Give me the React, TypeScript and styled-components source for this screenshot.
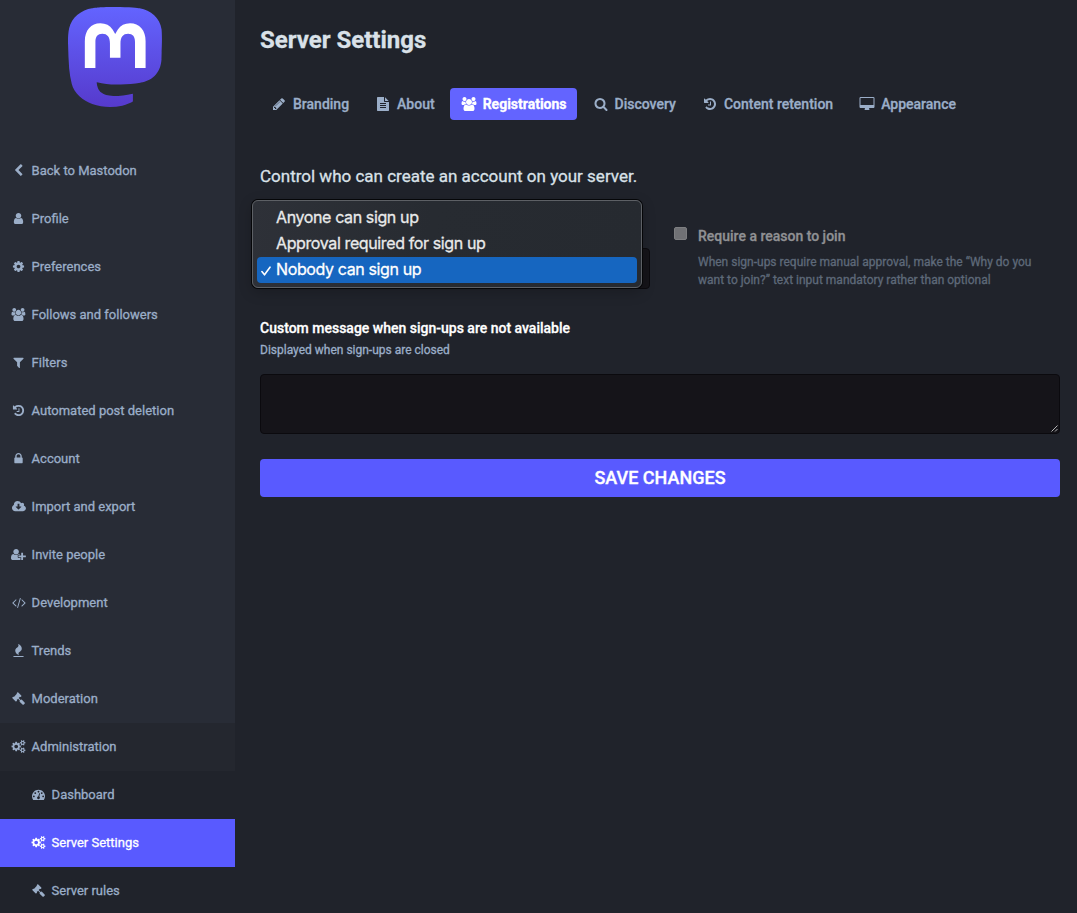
import React from 'react';
import styled, { createGlobalStyle, css } from 'styled-components';

const GlobalStyle = createGlobalStyle`
  *, *::before, *::after { box-sizing: border-box; }
  html, body { margin: 0; padding: 0; background: #20232b; }
  body {
    font-family: Roboto, "Liberation Sans", sans-serif;
    overflow: hidden;
    -webkit-text-stroke: 0.3px currentColor;
  }
`;

const icons = {
  back: { w: 1792, d: 'M1427 301l-531 531 531 531q19 19 19 45t-19 45l-166 166q-19 19-45 19t-45-19l-742-742q-19-19-19-45t19-45l742-742q19-19 45-19t45 19l166 166q19 19 19 45t-19 45z' },
  user: { w: 1792, d: 'M1536 1399q0 109-62.5 187t-150.5 78h-854q-88 0-150.5-78t-62.5-187q0-85 8.5-160.5t31.5-152 58.5-131 94-89 134.5-34.5q131 128 313 128t313-128q76 0 134.5 34.5t94 89 58.5 131 31.5 152 8.5 160.5zm-256-887q0 159-112.5 271.5t-271.5 112.5-271.5-112.5-112.5-271.5 112.5-271.5 271.5-112.5 271.5 112.5 112.5 271.5z' },
  cog: { w: 1792, d: 'M1152 896q0-106-75-181t-181-75-181 75-75 181 75 181 181 75 181-75 75-181zm512-109v222q0 12-8 23t-20 13l-185 28q-19 54-39 91 35 50 107 138 10 12 10 25t-9 23q-27 37-99 108t-94 71q-12 0-26-9l-138-108q-44 23-91 38-16 136-29 186-7 28-36 28h-222q-14 0-24.5-8.5t-11.5-21.5l-28-184q-49-16-90-37l-141 107q-10 9-25 9-14 0-25-11-126-114-165-168-7-10-7-23 0-12 8-23 15-21 51-66.5t54-70.5q-27-50-41-99l-183-27q-13-2-21-12.5t-8-23.5v-222q0-12 8-23t19-13l186-28q14-46 39-92-40-57-107-138-10-12-10-24 0-10 9-23 26-36 98.5-107.5t94.5-71.5q13 0 26 10l138 107q44-23 91-38 16-136 29-186 7-28 36-28h222q14 0 24.5 8.5t11.5 21.5l28 184q49 16 90 37l142-107q9-9 24-9 13 0 25 10 129 119 165 170 7 8 7 22 0 12-8 23-15 21-51 66.5t-54 70.5q26 50 41 98l183 28q13 2 21 12.5t8 23.5z' },
  users: { w: 2048, d: 'M657 896q-162 5-265 128h-134q-82 0-138-40.5t-56-118.5q0-353 124-353 6 0 43.5 21t97.5 42.5 119 21.5q67 0 133-23-5 37-5 66 0 139 81 256zm1071 637q0 120-73 189.5t-194 69.5h-874q-121 0-194-69.5t-73-189.5q0-53 3.5-103.5t14-109 26.5-108.5 43-97.5 62-81 85.5-53.5 111.5-20q10 0 43 21.5t73 48 107 48 135 21.5 135-21.5 107-48 73-48 43-21.5q61 0 111.5 20t85.5 53.5 62 81 43 97.5 26.5 108.5 14 109 3.5 103.5zm-1024-1277q0 106-75 181t-181 75-181-75-75-181 75-181 181-75 181 75 75 181zm704 384q0 159-112.5 271.5t-271.5 112.5-271.5-112.5-112.5-271.5 112.5-271.5 271.5-112.5 271.5 112.5 112.5 271.5zm576 225q0 78-56 118.5t-138 40.5h-134q-103-123-265-128 81-117 81-256 0-29-5-66 66 23 133 23 59 0 119-21.5t97.5-42.5 43.5-21q124 0 124 353zm-128-609q0 106-75 181t-181 75-181-75-75-181 75-181 181-75 181 75 75 181z' },
  filter: { w: 1792, d: 'M1595 295q17 41-14 70l-493 493v742q0 42-39 59-13 5-25 5-27 0-45-19l-256-256q-19-19-19-45v-486l-493-493q-31-29-14-70 17-39 59-39h1280q42 0 59 39z' },
  history: { w: 1792, d: 'M1664 896q0 156-61 298t-164 245-245 164-298 61q-172 0-327-72.5t-264-204.5q-7-10-6.5-22.5t8.5-20.5l137-138q10-9 25-9 16 2 23 12 73 95 179 147t225 52q104 0 198.5-40.5t163.5-109.5 109.5-163.5 40.5-198.5-40.5-198.5-109.5-163.5-163.5-109.5-198.5-40.5q-98 0-188 35.5t-160 101.5l137 138q31 30 14 69-17 40-59 40h-448q-26 0-45-19t-19-45v-448q0-42 40-59 39-17 69 14l130 129q107-101 244.5-156.5t284.5-55.5q156 0 298 61t245 164 164 245 61 298zm-640-288v448q0 14-9 23t-23 9h-320q-14 0-23-9t-9-23v-64q0-14 9-23t23-9h224v-352q0-14 9-23t23-9h64q14 0 23 9t9 23z' },
  lock: { w: 1792, d: 'M640 768h512v-192q0-106-75-181t-181-75-181 75-75 181v192zm832 96v576q0 40-28 68t-68 28h-960q-40 0-68-28t-28-68v-576q0-40 28-68t68-28h32v-192q0-184 132-316t316-132 316 132 132 316v192h32q40 0 68 28t28 68z' },
  cloud: { w: 1920, d: 'M1280 928q0-14-9-23t-23-9h-224v-352q0-13-9.5-22.5t-22.5-9.5h-192q-13 0-22.5 9.5t-9.5 22.5v352h-224q-13 0-22.5 9.5t-9.5 22.5q0 14 9 23l352 352q9 9 23 9t23-9l351-351q10-12 10-24zm640 224q0 159-112.5 271.5t-271.5 112.5h-1088q-185 0-316.5-131.5t-131.5-316.5q0-130 70-240t188-165q-2-30-2-43 0-212 150-362t362-150q156 0 285.5 87t188.5 231q71-62 166-62 106 0 181 75t75 181q0 76-41 138 130 31 213.5 135.5t83.5 238.5z' },
  userPlus: { w: 2048, d: 'M704 896q-159 0-271.5-112.5t-112.5-271.5 112.5-271.5 271.5-112.5 271.5 112.5 112.5 271.5-112.5 271.5-271.5 112.5zm960 128h352q13 0 22.5 9.5t9.5 22.5v192q0 13-9.5 22.5t-22.5 9.5h-352v352q0 13-9.5 22.5t-22.5 9.5h-192q-13 0-22.5-9.5t-9.5-22.5v-352h-352q-13 0-22.5-9.5t-9.5-22.5v-192q0-13 9.5-22.5t22.5-9.5h352v-352q0-13 9.5-22.5t22.5-9.5h192q13 0 22.5 9.5t9.5 22.5v352zm-736 224q0 52 38 90t90 38h256v238q-68 50-171 50h-874q-121 0-194-69t-73-190q0-53 3.5-103.5t14-109 26.5-108.5 43-97.5 62-81 85.5-53.5 111.5-20q19 0 39 17 79 61 154.5 91.5t164.5 30.5 164.5-30.5 154.5-91.5q20-17 39-17 132 0 217 96h-223q-52 0-90 38t-38 90v192z' },
  code: { w: 1920, d: 'M617 1399l-50 50q-10 10-23 10t-23-10l-466-466q-10-10-10-23t10-23l466-466q10-10 23-10t23 10l50 50q10 10 10 23t-10 23l-393 393 393 393q10 10 10 23t-10 23zm591-1067l-373 1291q-4 13-15.5 19.5t-23.5 2.5l-62-17q-13-4-19.5-15.5t-2.5-24.5l373-1291q4-13 15.5-19.5t23.5-2.5l62 17q13 4 19.5 15.5t2.5 24.5zm657 651l-466 466q-10 10-23 10t-23-10l-50-50q-10-10-10-23t10-23l393-393-393-393q-10-10-10-23t10-23l50-50q10-10 23-10t23 10l466 466q10 10 10 23t-10 23z' },
  fire: { w: 1792, d: 'M1600 1696v64q0 13-9.5 22.5t-22.5 9.5h-1344q-13 0-22.5-9.5t-9.5-22.5v-64q0-13 9.5-22.5t22.5-9.5h1344q13 0 22.5 9.5t9.5 22.5zm-256-1056q0 78-24.5 144t-64 112.5-87.5 88-96 77.5-87.5 72-64 81.5-24.5 96.5q0 96 67 224l-4-1 1 1q-90-41-160-83t-138.5-100-113.5-122.5-72.5-150.5-27.5-184q0-78 24.5-144t64-112.5 87.5-88 96-77.5 87.5-72 64-81.5 24.5-96.5q0-94-66-224l3 1-1-1q90 41 160 83t138.5 100 113.5 122.5 72.5 150.5 27.5 184z' },
  gavel: { w: 1792, d: 'M1771 1536q0 53-37 90l-107 108q-39 37-91 37-53 0-90-37l-363-364q-38-36-38-90 0-53 43-96l-256-256-126 126q-14 14-34 14t-34-14q2 2 12.5 12t12.5 13 10 11.5 10 13.5 6 13.5 5.5 16.5 1.5 18q0 38-28 68-3 3-16.5 18t-19 20.5-18.5 16.5-22 15.5-22 9-26 4.5q-40 0-68-28l-408-408q-28-28-28-68 0-13 4.5-26t9-22 15.5-22 16.5-18.5 20.5-19 18-16.5q30-28 68-28 10 0 18 1.5t16.5 5.5 13.5 6 13.5 10 11.5 10 13 12.5 12 12.5q-14-14-14-34t14-34l348-348q14-14 34-14t34 14q-2-2-12.5-12t-12.5-13-10-11.5-10-13.5-6-13.5-5.5-16.5-1.5-18q0-38 28-68 3-3 16.5-18t19-20.5 18.5-16.5 22-15.5 22-9 26-4.5q40 0 68 28l408 408q28 28 28 68 0 13-4.5 26t-9 22-15.5 22-16.5 18.5-20.5 19-18 16.5q-30 28-68 28-10 0-18-1.5t-16.5-5.5-13.5-6-13.5-10-11.5-10-13-12.5-12-12.5q14 14 14 34t-14 34l-126 126 256 256q43-43 96-43 52 0 91 37l363 363q37 39 37 91z' },
  cogs: { w: 1920, d: 'M832 896q0-106-75-181t-181-75-181 75-75 181 75 181 181 75 181-75 75-181zm768 512q0-52-38-90t-90-38-90 38-38 90q0 53 37.5 90.5t90.5 37.5 90.5-37.5 37.5-90.5zm0-1024q0-52-38-90t-90-38-90 38-38 90q0 53 37.5 90.5t90.5 37.5 90.5-37.5 37.5-90.5zm-384 421v185q0 10-7 19.5t-16 10.5l-155 24q-11 35-32 76 34 48 90 115 7 11 7 20 0 12-7 19-23 30-82.5 89.5t-78.5 59.5q-11 0-21-7l-115-90q-37 19-77 31-11 108-23 155-7 24-30 24h-186q-11 0-20-7.5t-10-17.5l-23-153q-34-10-75-31l-118 89q-7 7-20 7-11 0-21-8-144-133-144-160 0-9 7-19 10-14 41-53t47-61q-23-44-35-82l-152-24q-10-1-17-9.5t-7-19.5v-185q0-10 7-19.5t16-10.5l155-24q11-35 32-76-34-48-90-115-7-11-7-20 0-12 7-20 22-30 82-89t79-59q11 0 21 7l115 90q34-18 77-32 11-108 23-154 7-24 30-24h186q11 0 20 7.5t10 17.5l23 153q34 10 75 31l118-89q8-7 20-7 11 0 21 8 144 133 144 160 0 8-7 19-12 16-42 54t-45 60q23 48 34 82l152 23q10 2 17 10.5t7 19.5zm640 533v140q0 16-149 31-12 27-30 52 51 113 51 138 0 4-4 7-122 71-124 71-8 0-46-47t-52-68q-20 2-30 2t-30-2q-14 21-52 68t-46 47q-2 0-124-71-4-3-4-7 0-25 51-138-18-25-30-52-149-15-149-31v-140q0-16 149-31 13-29 30-52-51-113-51-138 0-4 4-7 4-2 35-20t59-34 30-16q8 0 46 46.5t52 67.5q20-2 30-2t30 2q51-71 92-112l6-2q4 0 124 70 4 3 4 7 0 25-51 138 17 23 30 52 149 15 149 31zm0-1024v140q0 16-149 31-12 27-30 52 51 113 51 138 0 4-4 7-122 71-124 71-8 0-46-47t-52-68q-20 2-30 2t-30-2q-14 21-52 68t-46 47q-2 0-124-71-4-3-4-7 0-25 51-138-18-25-30-52-149-15-149-31v-140q0-16 149-31 13-29 30-52-51-113-51-138 0-4 4-7 4-2 35-20t59-34 30-16q8 0 46 46.5t52 67.5q20-2 30-2t30 2q51-71 92-112l6-2q4 0 124 70 4 3 4 7 0 25-51 138 17 23 30 52 149 15 149 31z' },
  dashboard: { w: 1792, d: 'M384 1152q0-53-37.5-90.5t-90.5-37.5-90.5 37.5-37.5 90.5 37.5 90.5 90.5 37.5 90.5-37.5 37.5-90.5zm192-448q0-53-37.5-90.5t-90.5-37.5-90.5 37.5-37.5 90.5 37.5 90.5 90.5 37.5 90.5-37.5 37.5-90.5zm428 481l101-382q6-26-7.5-48.5t-38.5-29.5-48 6.5-30 39.5l-101 382q-60 5-107 43.5t-63 98.5q-20 77 20 146t117 89 146-20 89-117q16-60-6-117t-72-91zm660-33q0-53-37.5-90.5t-90.5-37.5-90.5 37.5-37.5 90.5 37.5 90.5 90.5 37.5 90.5-37.5 37.5-90.5zm-640-640q0-53-37.5-90.5t-90.5-37.5-90.5 37.5-37.5 90.5 37.5 90.5 90.5 37.5 90.5-37.5 37.5-90.5zm448 192q0-53-37.5-90.5t-90.5-37.5-90.5 37.5-37.5 90.5 37.5 90.5 90.5 37.5 90.5-37.5 37.5-90.5zm320 448q0 261-141 483-19 29-54 29h-1402q-35 0-54-29-141-221-141-483 0-182 71-348t191-286 286-191 348-71 348 71 286 191 191 286 71 348z' },
  pencil: { w: 1792, d: 'M491 1536l91-91-235-235-91 91v107h128v128h107zm523-928q0-22-22-22-10 0-17 7l-542 542q-7 7-7 17 0 22 22 22 10 0 17-7l542-542q7-7 7-17zm-54-192l416 416-832 832h-416v-416zm683 96q0 53-37 90l-166 166-416-416 166-165q36-38 90-38 53 0 91 38l235 234q37 39 37 91z' },
  file: { w: 1792, d: 'M1596 476q14 14 28 36h-472v-472q22 14 36 28zm-476 164h544v1056q0 40-28 68t-68 28h-1344q-40 0-68-28t-28-68v-1600q0-40 28-68t68-28h800v544q0 40 28 68t68 28zm160 736v-64q0-14-9-23t-23-9h-704q-14 0-23 9t-9 23v64q0 14 9 23t23 9h704q14 0 23-9t9-23zm0-256v-64q0-14-9-23t-23-9h-704q-14 0-23 9t-9 23v64q0 14 9 23t23 9h704q14 0 23-9t9-23zm0-256v-64q0-14-9-23t-23-9h-704q-14 0-23 9t-9 23v64q0 14 9 23t23 9h704q14 0 23-9t9-23z' },
  search: { w: 1792, d: 'M1216 832q0-185-131.5-316.5t-316.5-131.5-316.5 131.5-131.5 316.5 131.5 316.5 316.5 131.5 316.5-131.5 131.5-316.5zm512 832q0 52-38 90t-90 38q-54 0-90-38l-343-342q-179 124-399 124-143 0-273.5-55.5t-225-150-150-225-55.5-273.5 55.5-273.5 150-225 225-150 273.5-55.5 273.5 55.5 225 150 150 225 55.5 273.5q0 220-124 399l343 343q37 37 37 90z' },
  desktop: { w: 1792, d: 'M1728 992v-832q0-13-9.5-22.5t-22.5-9.5h-1600q-13 0-22.5 9.5t-9.5 22.5v832q0 13 9.5 22.5t22.5 9.5h1600q13 0 22.5-9.5t9.5-22.5zm128-832v1088q0 66-47 113t-113 47h-544q0 37 16 77.5t32 71 16 43.5q0 26-19 45t-45 19h-512q-26 0-45-19t-19-45q0-14 16-44t32-70 16-78h-544q-66 0-113-47t-47-113v-1088q0-66 47-113t113-47h1600q66 0 113 47t47 113z' },
};

type IconName = keyof typeof icons;

const IconSvg = styled.svg`
  flex: none;
  overflow: visible;
  fill: currentColor;
`;

function Icon({ name, size }: { name: IconName; size: number }) {
  const { w, d } = icons[name];
  return (
    <IconSvg viewBox={`0 0 ${w} 1792`} width={(size * w) / 1792} height={size} aria-hidden="true">
      <path d={d} />
    </IconSvg>
  );
}

const Page = styled.div`
  display: flex;
  width: 1077px;
  height: 913px;
  overflow: hidden;
  background: #20232b;
`;

const Sidebar = styled.aside`
  width: 235px;
  flex: none;
  background: #282c36;
`;

const LogoLink = styled.a`
  display: flex;
  justify-content: center;
  height: 147px;
  padding: 7px 5px 0 0;
`;

const NavList = styled.ul<{ $nested?: boolean }>`
  list-style: none;
  margin: 0;
  padding: 0;
  ${(p) => p.$nested && css`background: #20232b;`}
`;

const NavLink = styled.a<{ $nested?: boolean; $open?: boolean; $selected?: boolean }>`
  display: flex;
  align-items: center;
  gap: 4.1px;
  height: 48px;
  padding-bottom: 2px;
  padding-left: ${(p) => (p.$nested ? 29.5 : 9.5)}px;
  font-size: 13px;
  font-weight: 400;
  color: ${(p) => (p.$selected ? '#fff' : '#9baec8')};
  background: ${(p) => (p.$selected ? '#595aff' : p.$open ? '#24272f' : 'transparent')};
`;

const IconSlot = styled.span<{ $width: number }>`
  display: flex;
  justify-content: center;
  flex: none;
  width: ${(p) => p.$width}px;
`;

const Content = styled.main`
  flex: 1;
  padding: 24px 17px 0 25px;
`;

const Title = styled.h1`
  margin: 0;
  font-size: 24px;
  line-height: 32px;
  font-weight: 700;
  color: #d9e1e8;
`;

const Tabs = styled.nav`
  display: flex;
  gap: 5px;
  margin-top: 32px;
`;

const Tab = styled.a<{ $active?: boolean }>`
  display: flex;
  align-items: center;
  gap: 5px;
  height: 32px;
  padding: 0 10px;
  border-radius: 4px;
  font-size: 14px;
  font-weight: ${(p) => (p.$active ? 700 : 500)};
  white-space: nowrap;
  color: ${(p) => (p.$active ? '#fff' : '#9baec8')};
  background: ${(p) => (p.$active ? '#6364ff' : 'transparent')};
`;

const Lead = styled.p`
  margin: 44px 0 0;
  font-size: 17px;
  line-height: 24px;
  color: #d9e1e8;
`;

const FieldRow = styled.div`
  display: grid;
  grid-template-columns: 390px 1fr;
  column-gap: 24px;
  height: 101px;
  margin-top: 12px;
`;

const SelectField = styled.div`
  position: relative;
  padding-top: 48px;
`;

const SelectBox = styled.div`
  height: 41px;
  border: 1px solid #0b0a0e;
  border-radius: 4px;
  background: #151419;
`;

const Menu = styled.ul`
  position: absolute;
  left: -8px;
  top: 0;
  width: 390px;
  height: 88px;
  margin: 0;
  padding: 4px;
  list-style: none;
  border: 1px solid #5d6065;
  border-radius: 6px;
  background: linear-gradient(100deg, #2e3138, #272b31 45%, #262a30);
  box-shadow: 0 0 0 1px #050608, 0 4px 14px rgba(0, 0, 0, 0.22);
`;

const MenuItem = styled.li<{ $selected?: boolean }>`
  display: flex;
  align-items: center;
  height: 26px;
  padding-bottom: 2px;
  border-radius: 4px;
  font-family: Inter, Roboto, sans-serif;
  font-size: 16px;
  font-weight: 400;
  letter-spacing: -0.38px;
  color: ${(p) => (p.$selected ? '#fff' : '#e9eaea')};
  background: ${(p) => (p.$selected ? '#1666c0' : 'transparent')};
`;

const CheckSlot = styled.span`
  display: flex;
  width: 19px;
  padding: 4px 0 0 4px;
`;

const CheckField = styled.label`
  display: flex;
  gap: 11px;
  padding-top: 25px;
`;

const Checkbox = styled.span`
  flex: none;
  width: 13px;
  height: 13px;
  margin-top: 2px;
  border: 1px solid #7d7e81;
  border-radius: 2px;
  background: #707175;
`;

const CheckTitle = styled.div`
  font-size: 14px;
  line-height: 22px;
  font-weight: 500;
  color: #909194;
`;

const CheckHint = styled.div`
  margin-top: 6px;
  font-size: 12px;
  line-height: 18px;
  color: #5e6979;
`;

const Label = styled.div`
  margin-top: 17px;
  font-size: 14px;
  line-height: 20px;
  font-weight: 500;
  color: #fff;
`;

const Hint = styled.div`
  margin-top: 3px;
  font-size: 12px;
  line-height: 18px;
  color: #9baec8;
`;

const MessageBox = styled.div`
  display: flex;
  align-items: flex-end;
  justify-content: flex-end;
  height: 60px;
  margin-top: 15px;
  padding: 1px;
  border: 1px solid #0b0a0e;
  border-radius: 4px;
  background: #151419;
`;

const SaveButton = styled.button`
  display: block;
  width: 100%;
  height: 38px;
  margin-top: 25px;
  padding: 0;
  border: 0;
  border-radius: 4px;
  background: #595aff;
  font-family: inherit;
  font-size: 18px;
  font-weight: 500;
  line-height: 38px;
  text-transform: uppercase;
  color: #fff;
`;

const navItems: { icon: IconName; label: string; open?: boolean }[] = [
  { icon: 'back', label: 'Back to Mastodon' },
  { icon: 'user', label: 'Profile' },
  { icon: 'cog', label: 'Preferences' },
  { icon: 'users', label: 'Follows and followers' },
  { icon: 'filter', label: 'Filters' },
  { icon: 'history', label: 'Automated post deletion' },
  { icon: 'lock', label: 'Account' },
  { icon: 'cloud', label: 'Import and export' },
  { icon: 'userPlus', label: 'Invite people' },
  { icon: 'code', label: 'Development' },
  { icon: 'fire', label: 'Trends' },
  { icon: 'gavel', label: 'Moderation' },
  { icon: 'cogs', label: 'Administration', open: true },
];

const adminItems: { icon: IconName; label: string; selected?: boolean }[] = [
  { icon: 'dashboard', label: 'Dashboard' },
  { icon: 'cogs', label: 'Server Settings', selected: true },
  { icon: 'gavel', label: 'Server rules' },
];

const tabs: { icon: IconName; label: string; active?: boolean }[] = [
  { icon: 'pencil', label: 'Branding' },
  { icon: 'file', label: 'About' },
  { icon: 'users', label: 'Registrations', active: true },
  { icon: 'search', label: 'Discovery' },
  { icon: 'history', label: 'Content retention' },
  { icon: 'desktop', label: 'Appearance' },
];

function Logo() {
  return (
    <svg width="94" height="100" viewBox="0 0 74.2 79" preserveAspectRatio="none" role="img" aria-label="Mastodon">
      <defs>
        <linearGradient id="logo-fill" x1="0" y1="0" x2="0" y2="1">
          <stop offset="0" stopColor="#6364ff" />
          <stop offset="1" stopColor="#563acc" />
        </linearGradient>
      </defs>
      <path
        fill="url(#logo-fill)"
        d="M73.8393 17.4898C72.6973 9.00165 65.2994 2.31235 56.5296 1.01614C55.05 0.797115 49.4441 0 36.4582 0H36.3612C23.3717 0 20.585 0.797115 19.1054 1.01614C10.5798 2.27644 2.79399 8.28712 0.904997 16.8758C-0.00358524 21.1056 -0.100549 25.7949 0.0682394 30.0965C0.308852 36.2651 0.355538 42.423 0.91577 48.5665C1.30307 52.6474 1.97872 56.6957 2.93763 60.6812C4.73325 68.042 12.0019 74.1676 19.1233 76.6666C26.7478 79.2728 34.9474 79.7055 42.8039 77.9162C43.6682 77.7151 44.5217 77.4817 45.3645 77.216C47.275 76.6092 49.5123 75.9305 51.1571 74.7385L51.2325 74.5948V68.6416L51.0171 68.4729C45.9835 69.675 40.8254 70.2777 35.6502 70.2682C26.7439 70.2682 24.3486 66.042 23.6626 64.2826C23.1113 62.762 22.7612 61.1759 22.6212 59.5646L22.8367 59.3886C27.7864 60.5826 32.8604 61.1853 37.9522 61.1839C39.1768 61.1839 40.3978 61.1839 41.6224 61.1516C46.7435 61.008 52.1411 60.7459 57.1796 59.7621L57.5387 59.6831C65.4861 58.157 73.0493 53.3672 73.8178 41.2381C73.8465 40.7606 73.9184 36.2364 73.9184 35.7409C73.9219 34.0569 74.4606 23.7949 73.8393 17.4898Z"
      />
      <path
        fill="#fff"
        d="M61.2484 27.0263V48.114H52.8916V27.6475C52.8916 23.3388 51.096 21.1413 47.4437 21.1413C43.4287 21.1413 41.4177 23.7409 41.4177 28.8755V40.0782H33.1111V28.8755C33.1111 23.7409 31.0965 21.1413 27.0815 21.1413C23.4507 21.1413 21.6371 23.3388 21.6371 27.6475V48.114H13.2839V27.0263C13.2839 22.7176 14.384 19.2946 16.5843 16.7572C18.8539 14.2258 21.8311 12.926 25.5264 12.926C29.8036 12.926 33.0357 14.5705 35.1905 17.8559L37.2698 21.346L39.3527 17.8559C41.5074 14.5705 44.7395 12.926 49.0095 12.926C52.7013 12.926 55.6784 14.2258 57.9553 16.7572C60.1531 19.2922 61.2508 22.7152 61.2484 27.0263Z"
      />
    </svg>
  );
}

export default function App() {
  return (
    <>
      <GlobalStyle />
      <Page>
        <Sidebar>
          <LogoLink>
            <Logo />
          </LogoLink>
          <NavList>
            {navItems.map((item) => (
              <li key={item.label}>
                <NavLink $open={item.open}>
                  <IconSlot $width={18}>
                    <Icon name={item.icon} size={13} />
                  </IconSlot>
                  {item.label}
                </NavLink>
              </li>
            ))}
          </NavList>
          <NavList $nested>
            {adminItems.map((item) => (
              <li key={item.label}>
                <NavLink $nested $selected={item.selected}>
                  <IconSlot $width={18}>
                    <Icon name={item.icon} size={13} />
                  </IconSlot>
                  {item.label}
                </NavLink>
              </li>
            ))}
          </NavList>
        </Sidebar>
        <Content>
          <Title>Server Settings</Title>
          <Tabs>
            {tabs.map((tab) => (
              <Tab key={tab.label} $active={tab.active}>
                <IconSlot $width={18}>
                  <Icon name={tab.icon} size={14} />
                </IconSlot>
                {tab.label}
              </Tab>
            ))}
          </Tabs>
          <Lead>Control who can create an account on your server.</Lead>
          <FieldRow>
            <SelectField>
              <SelectBox />
              <Menu>
                <MenuItem>
                  <CheckSlot />
                  Anyone can sign up
                </MenuItem>
                <MenuItem>
                  <CheckSlot />
                  Approval required for sign up
                </MenuItem>
                <MenuItem $selected>
                  <CheckSlot>
                    <svg width="10" height="10" viewBox="0 0 10 10" fill="none" stroke="#fff" strokeWidth="1.6" strokeLinecap="round" strokeLinejoin="round">
                      <path d="M0.9 5.6L3.5 8.8L9 1.2" />
                    </svg>
                  </CheckSlot>
                  Nobody can sign up
                </MenuItem>
              </Menu>
            </SelectField>
            <CheckField>
              <Checkbox />
              <div>
                <CheckTitle>Require a reason to join</CheckTitle>
                <CheckHint>
                  When sign-ups require manual approval, make the “Why do you
                  <br />
                  want to join?” text input mandatory rather than optional
                </CheckHint>
              </div>
            </CheckField>
          </FieldRow>
          <Label>Custom message when sign-ups are not available</Label>
          <Hint>Displayed when sign-ups are closed</Hint>
          <MessageBox>
            <svg width="7" height="7" viewBox="0 0 7 7" stroke="#c4c4c6" strokeWidth="0.9">
              <path d="M0.5 6.5L6.5 0.5M4 6.5L6.5 4" />
            </svg>
          </MessageBox>
          <SaveButton>Save changes</SaveButton>
        </Content>
      </Page>
    </>
  );
}
